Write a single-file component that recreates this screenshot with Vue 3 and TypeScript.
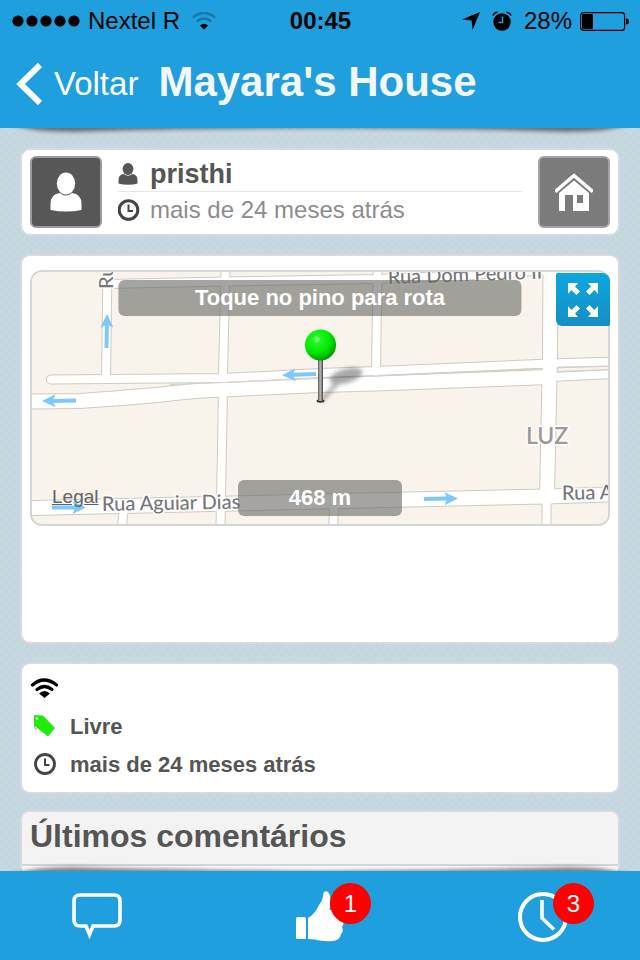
<script setup lang="ts">
import { ref } from 'vue'

interface StreetLabel {
  text: string
  x: number
  y: number
  angle: number
}

const place = ref("Mayara's House")
const user = ref('pristhi')
const lastSeen = ref('mais de 24 meses atrás')
const distance = ref('468 m')
const likes = ref(1)
const checkins = ref(3)

const roads: { d: string; kind: string }[] = [
  { d: 'M107.5 268L106 379', kind: 'narrow' },
  { d: 'M107 284L225 281.5L377 279L470 275L550 270', kind: 'narrow' },
  { d: 'M225.5 268L223 375L222.5 420L220.5 528', kind: 'narrow' },
  { d: 'M377.5 268L376 372', kind: 'narrow' },
  { d: 'M546.5 495V528', kind: 'narrow' },
  { d: 'M123.5 510L122 528', kind: 'narrow' },
  { d: 'M334.5 502L333 528', kind: 'narrow' },
  { d: 'M550.5 268L550 355L549 400L547 498', kind: 'wide' },
  { d: 'M51 379.5L223 378L320 373L376 371L550 363.5L612 361.5', kind: 'narrow' },
  { d: 'M550 377L612 374', kind: 'narrow' },
  { d: 'M28 401.5L80 401Q150 396 170 393.5Q200 390 223 389.5L320 385L376 383.5L550 377', kind: 'wide' },
  { d: 'M28 508L320 501.5L546 496.5L612 494.5', kind: 'wide' },
]

const arrows: string[] = [
  'translate(106.5 348) rotate(-89)',
  'translate(76 400.5) rotate(179)',
  'translate(316 374) rotate(178)',
  'translate(52 507.5)',
  'translate(424 499) rotate(-1)',
]

const labels: StreetLabel[] = [
  { text: 'Rua Dom Pedro II', x: 388, y: 284, angle: -2 },
  { text: 'Rua Aguiar Dias', x: 102, y: 511, angle: -1 },
  { text: 'Rua A', x: 562, y: 500, angle: -1 },
  { text: 'Ru', x: 113, y: 289, angle: -90 },
]
</script>

<template>
  <div class="app">
    <header class="top">
      <div class="status">
        <div class="status-side">
          <svg width="68" height="12" viewBox="0 0 68 12" aria-hidden="true">
            <circle v-for="n in 5" :key="n" :cx="n * 14 - 8" cy="6" r="5.6" />
          </svg>
          <span>Nextel R</span>
          <svg class="status-wifi" width="24" height="18" viewBox="0 0 24 18" fill="none" aria-hidden="true">
            <path d="M1 5.5Q12 -3.5 23 5.5" stroke="#1479a9" stroke-width="2.6" />
            <path d="M4.8 9.6Q12 3.4 19.2 9.6" stroke="#1479a9" stroke-width="2.6" />
            <path d="M8 13.4Q12 10 16 13.4L12 17.8Z" fill="#000" />
          </svg>
        </div>
        <strong class="time">00:45</strong>
        <div class="status-side right">
          <svg class="locate" width="18" height="18" viewBox="0 0 18 18" aria-hidden="true">
            <path d="M18 0L10.5 18L9.6 8.5L0 7.6Z" />
          </svg>
          <svg class="alarm" width="20" height="20" viewBox="0 0 20 20" aria-hidden="true">
            <circle cx="10" cy="11" r="8.7" />
            <path d="M1 4.5Q2 1.5 5.5 1.2M19 4.5Q18 1.5 14.5 1.2" fill="none" stroke="#000" stroke-width="1.5" />
            <path d="M10.5 5.5V11.5H6.5" fill="none" stroke="#1f9fdd" stroke-width="1.6" />
          </svg>
          <span>28%</span>
          <svg width="49" height="19" viewBox="0 0 49 19" aria-hidden="true">
            <rect x=".6" y=".6" width="44" height="17.8" rx="3" fill="none" stroke="#000" stroke-width="1.2" />
            <rect x="2" y="2" width="11" height="15" rx="1" />
            <path d="M46 6.5Q49 6.5 49 9.5T46 12.5Z" />
          </svg>
        </div>
      </div>
      <div class="bar">
        <button class="back" type="button">
          <svg width="26" height="42" viewBox="0 0 26 42" fill="none" aria-hidden="true">
            <path d="M24 2L4.5 21L24 40" stroke="#fff" stroke-width="6" />
          </svg>
          <span>Voltar</span>
        </button>
        <h1>{{ place }}</h1>
      </div>
      <svg class="curl" viewBox="0 0 640 12" preserveAspectRatio="none" aria-hidden="true">
        <path d="M0 -6L30 1Q55 5 100 3Q200 0 320 0Q440 0 540 3Q585 5 610 1L640 -6Z" />
      </svg>
    </header>

    <main class="content">
      <section class="card profile">
        <button class="tile" type="button" aria-label="Perfil">
          <svg width="34" height="42" viewBox="0 0 34 42" fill="#fff" aria-hidden="true">
            <ellipse cx="17" cy="12.5" rx="9.2" ry="11" />
            <path d="M1.500 39V33Q1.500 23 11 22Q17 27 23 22Q32.500 23 32.500 33V39Q25 40.500 17 40.500T1.500 39Z" />
          </svg>
        </button>
        <div class="who">
          <div class="who-row name">
            <svg width="22" height="22" viewBox="0 0 22 22" fill="#555" aria-hidden="true">
              <ellipse cx="10" cy="6" rx="5.4" ry="6" />
              <path d="M.5 20.500V17Q.5 11.500 6 11Q10 14.500 14 11Q19.500 11.500 19.500 17V20.500Q15.500 21.800 10 21.800T.5 20.500Z" />
            </svg>
            <strong>{{ user }}</strong>
          </div>
          <div class="who-row seen">
            <svg width="22" height="22" viewBox="0 0 22 22" fill="none" stroke="#444" aria-hidden="true">
              <circle cx="10.5" cy="11" r="9.3" stroke-width="3" />
              <path d="M10.500 5.500V12H15" stroke-width="2" />
            </svg>
            <span>{{ lastSeen }}</span>
          </div>
        </div>
        <button class="tile home" type="button" aria-label="Casa">
          <svg width="38" height="38" viewBox="0 0 38 38" aria-hidden="true">
            <path d="M1.500 17.500L19 2.500L36.500 17.500" fill="none" stroke="#fff" stroke-width="3.6" stroke-linecap="square" />
            <path d="M4 38V20L19 7.500L34 20V38H18V22H10V38ZM22 22V30H28V22Z" fill="#fff" fill-rule="evenodd" />
          </svg>
        </button>
      </section>

      <section class="card map-card">
        <div class="map">
          <svg class="streets" viewBox="32 272 576 252" preserveAspectRatio="xMidYMid slice" role="img" aria-label="Mapa">
            <defs>
              <radialGradient id="pin-head" cx=".38" cy=".32" r=".7">
                <stop offset="0" stop-color="#b6ffb6" />
                <stop offset=".17" stop-color="#22f722" />
                <stop offset=".6" stop-color="#00ea00" />
                <stop offset="1" stop-color="#009c00" />
              </radialGradient>
              <linearGradient id="pin-stem">
                <stop offset="0" stop-color="#555" />
                <stop offset=".45" stop-color="#bbb" />
                <stop offset="1" stop-color="#444" />
              </linearGradient>
              <filter id="soft" x="-30%" y="-30%" width="160%" height="160%">
                <feGaussianBlur stdDeviation="2" />
              </filter>
            </defs>
            <rect x="-400" y="0" width="1440" height="900" fill="#f8f4ec" />
            <path v-for="(r, i) in roads" :key="'c' + i" :d="r.d" :class="['casing', r.kind]" />
            <path v-for="(r, i) in roads" :key="'f' + i" :d="r.d" :class="['road', r.kind]" />
            <path d="M170 384.500L240 382L376 376L542 368.500M558 367L612 366M558 371.500L612 369.500" class="median" />
            <path
              v-for="a in arrows"
              :key="a"
              :transform="a"
              d="M0 -2H22.500L20.500 -6.500L34 0L20.500 6.500L22.500 2H0Z"
              fill="#7dc8fc"
            />
            <text
              v-for="l in labels"
              :key="l.text"
              class="street"
              :transform="`translate(${l.x} ${l.y}) rotate(${l.angle})`"
            >{{ l.text }}</text>
            <text class="district" x="526" y="444">LUZ</text>
            <g filter="url(#soft)" opacity=".42">
              <path d="M321 401L340 380" stroke="#333" stroke-width="4" />
              <ellipse cx="346" cy="376" rx="17" ry="7" transform="rotate(-16 346 376)" fill="#333" />
            </g>
            <ellipse cx="320.5" cy="401" rx="4" ry="1.7" fill="#333" />
            <rect x="318" y="358" width="5" height="43" fill="url(#pin-stem)" />
            <circle cx="320.5" cy="345" r="15.5" fill="url(#pin-head)" />
          </svg>
          <p class="pill hint">Toque no pino para rota</p>
          <p class="pill distance">{{ distance }}</p>
          <a class="legal" href="#legal">Legal</a>
          <button class="expand" type="button" aria-label="Expandir mapa">
            <svg width="30" height="34" viewBox="0 0 30 34" fill="#fff" aria-hidden="true">
              <path d="M0 0H10L7 3.500L12 8.500L8.500 12L3.500 7L0 11Z" />
              <path d="M30 0H20L23 3.500L18 8.500L21.500 12L26.500 7L30 11Z" />
              <path d="M0 34H10L7 30.500L12 25.500L8.500 22L3.500 27L0 23Z" />
              <path d="M30 34H20L23 30.500L18 25.500L21.500 22L26.500 27L30 23Z" />
            </svg>
          </button>
        </div>
      </section>

      <section class="card">
        <ul class="facts">
          <li>
            <svg width="28" height="22" viewBox="0 0 28 22" fill="none" stroke="#000" stroke-linecap="round" aria-hidden="true">
              <path d="M2.500 8Q14 -2 26.500 8" stroke-width="3.2" />
              <path d="M7 12.500Q14.500 6.500 22 12.500" stroke-width="3.2" />
              <path d="M9 16.500Q14.500 11.500 20 16.500L14.500 21Z" fill="#000" stroke="none" />
            </svg>
          </li>
          <li>
            <svg width="28" height="24" viewBox="0 0 28 24" aria-hidden="true">
              <path d="M5 10Q3 13 7 16" fill="none" stroke="#b9b4c4" stroke-width="1.2" />
              <path d="M4 2Q4 1 5 1L13 1.500L25 14L18 22.500L4 11.500Z" fill="#22ea0b" />
              <circle cx="7" cy="4.5" r="1.3" fill="#d6fbd0" />
            </svg>
            <span>Livre</span>
          </li>
          <li>
            <svg width="28" height="22" viewBox="0 0 28 22" fill="none" stroke="#444" aria-hidden="true">
              <circle cx="15" cy="11" r="9.5" stroke-width="2.8" />
              <path d="M15 5.500V12H19.500" stroke-width="2" />
            </svg>
            <span>{{ lastSeen }}</span>
          </li>
        </ul>
      </section>

      <section class="card comments">
        <h2>Últimos comentários</h2>
        <div class="comment-list"></div>
      </section>
    </main>

    <nav class="tabs">
      <svg class="curl" viewBox="0 0 640 12" preserveAspectRatio="none" aria-hidden="true">
        <path d="M0 18L30 11Q55 7 100 9Q200 11 320 12Q440 11 540 9Q585 7 610 11L640 18Z" />
      </svg>
      <button class="tab" type="button" aria-label="Comentários">
        <svg width="50" height="52" viewBox="0 0 50 52" fill="none" aria-hidden="true">
          <path
            d="M8 5H42Q48 5 48 11V30Q48 36 42 36H21L17.500 44.500L14 36H8Q2 36 2 30V11Q2 5 8 5Z"
            stroke="#fff"
            stroke-width="3.6"
          />
        </svg>
      </button>
      <button class="tab" type="button" aria-label="Curtir">
        <svg width="50" height="52" viewBox="0 0 50 52" fill="#fff" aria-hidden="true">
          <rect x="1" y="27" width="10" height="22" rx="1.5" />
          <path d="M13 28Q20 24 24 15Q28 10 28.500 3Q30 0 33 2Q37 6 34.500 20L45 21Q50 24 47 29Q50 33 47 37Q49 41 46 44Q45 50 38 51Q28 52 20 49.500L13 49Z" />
        </svg>
        <span class="badge">{{ likes }}</span>
      </button>
      <button class="tab" type="button" aria-label="Check-ins">
        <svg width="50" height="52" viewBox="0 0 50 52" fill="none" stroke="#fff" aria-hidden="true">
          <circle cx="25" cy="27" r="23" stroke-width="4" />
          <path d="M24 10V28L36 39.500" stroke-width="3.6" />
        </svg>
        <span class="badge">{{ checkins }}</span>
      </button>
    </nav>
  </div>
</template>

<style>
body {
  margin: 0;
}
</style>

<style scoped>
.app {
  display: flex;
  flex-direction: column;
  height: 100vh;
  overflow: hidden;
  font-family: "Liberation Sans", Arial, sans-serif;
  color: #555;
  background-color: #c8d8e1;
  background-image:
    repeating-linear-gradient(45deg, rgba(160, 195, 215, 0.08) 0 2px, transparent 2px 6px),
    repeating-linear-gradient(-45deg, rgba(160, 195, 215, 0.08) 0 2px, transparent 2px 6px);
}

svg {
  display: block;
  flex: none;
}

h1,
h2,
p,
ul {
  margin: 0;
  padding: 0;
}

button {
  border: 0;
  padding: 0;
  background: none;
  font: inherit;
  color: inherit;
  cursor: pointer;
}

.top,
.tabs {
  position: relative;
  z-index: 1;
  flex: none;
  background: #1f9fdd;
}

.status {
  display: grid;
  grid-template-columns: 1fr auto 1fr;
  align-items: center;
  height: 40px;
  padding: 0 11px 0 12px;
  font-size: 24px;
  line-height: 42px;
  color: #000;
}

.status-side {
  display: flex;
  align-items: center;
  gap: 8px;
}

.status-side.right {
  justify-content: flex-end;
}

.status-wifi {
  margin-left: 4px;
}

.locate,
.alarm {
  margin-right: 4px;
}

.bar {
  display: flex;
  align-items: center;
  gap: 20px;
  height: 88px;
  padding: 0 16px;
  box-sizing: border-box;
}

.back {
  display: flex;
  align-items: center;
  gap: 12px;
  font-size: 33px;
  line-height: 44px;
  color: #fff;
}

h1 {
  padding-bottom: 4px;
  font-size: 42px;
  line-height: 48px;
  color: #f4f6f8;
  white-space: nowrap;
}

.curl {
  position: absolute;
  left: 0;
  width: 100%;
  height: 12px;
  overflow: visible;
  fill: #222;
  opacity: 0.6;
  filter: blur(2px);
  pointer-events: none;
}

.top .curl {
  top: 100%;
  clip-path: inset(0 0 -8px 0);
}

.tabs .curl {
  bottom: 100%;
  clip-path: inset(-8px 0 0 0);
}

.content {
  display: flex;
  flex: 1;
  flex-direction: column;
  gap: 18px;
  min-height: 0;
  padding: 20px 20px 0;
  overflow-y: auto;
  scrollbar-width: none;
}

.card {
  flex: none;
  border: 2px solid #d8dade;
  border-radius: 10px;
  background: #fff;
}

.profile {
  display: flex;
  gap: 16px;
  padding: 6px 8px;
}

.tile {
  display: grid;
  place-items: center;
  width: 72px;
  height: 72px;
  border: 2px solid #9b9b9b;
  border-radius: 6px;
  background: #575757;
}

.tile.home {
  border-color: #a3a3a3;
  background: #7b7b7b;
}

.who {
  flex: 1;
}

.who-row {
  display: flex;
  align-items: center;
  gap: 10px;
  height: 36px;
}

.who-row.name {
  box-sizing: border-box;
  border-bottom: 1px solid #e6e6e6;
  font-size: 27px;
}

.who-row.seen {
  font-size: 24px;
  color: #8c8c8c;
}

.map-card {
  padding: 14px 8px 116px;
}

.map {
  position: relative;
  height: 252px;
  border: 2px solid #d5d5d8;
  border-radius: 12px;
}

.streets {
  width: 100%;
  height: 100%;
  border-radius: 10px;
}

.casing,
.road {
  fill: none;
  stroke-linecap: round;
  stroke-linejoin: round;
}

.casing {
  stroke: #d0cac1;
}

.road {
  stroke: #fff;
}

.casing.narrow {
  stroke-width: 10px;
}

.road.narrow {
  stroke-width: 8px;
}

.casing.wide {
  stroke-width: 16px;
}

.road.wide {
  stroke-width: 14px;
}

.median {
  fill: none;
  stroke: #d6cfc5;
  stroke-width: 1px;
}

.street,
.district {
  font-family: Lato, sans-serif;
  font-size: 20px;
  font-weight: 500;
  fill: #77777a;
  stroke: #fff;
  stroke-width: 3px;
  stroke-linejoin: round;
  paint-order: stroke;
}

.district {
  font-size: 23px;
  font-weight: 600;
  fill: #9d9b99;
}

.pill {
  position: absolute;
  left: 50%;
  transform: translateX(-50%);
  border-radius: 6px;
  background: rgba(105, 103, 101, 0.6);
  color: #fff;
  font-size: 22px;
  font-weight: bold;
  line-height: 36px;
  text-align: center;
}

.hint {
  top: 8px;
  width: 70%;
}

.distance {
  bottom: 8px;
  width: 164px;
}

.legal {
  position: absolute;
  left: 20px;
  bottom: 16px;
  color: #626262;
  font-size: 19px;
  line-height: 22px;
  text-decoration: underline;
}

.expand {
  position: absolute;
  top: 1px;
  right: -2px;
  display: grid;
  place-items: center;
  width: 54px;
  height: 53px;
  border-radius: 2px 8px 2px 6px;
  background: linear-gradient(#0da6e0, #168ec3);
}

.facts {
  padding: 5px 8px 9px;
  list-style: none;
  font-size: 22px;
  font-weight: bold;
}

.facts li {
  display: flex;
  align-items: center;
  gap: 12px;
  height: 38px;
}

.facts span,
.who-row strong {
  padding-top: 2px;
}

.comments {
  margin-top: -2px;
  overflow: hidden;
}

h2 {
  padding: 0 8px 4px;
  border-bottom: 2px solid #d5d5d5;
  background: #f3f3f3;
  font-size: 32px;
  line-height: 48px;
}

.comment-list {
  height: 24px;
}

.tabs {
  display: flex;
  align-items: center;
  justify-content: space-between;
  height: 89px;
  padding: 0 72px;
}

.tab {
  position: relative;
}

.badge {
  position: absolute;
  top: -7px;
  right: -26px;
  width: 41px;
  border-radius: 50%;
  background: #f00;
  color: #fff;
  font-size: 24px;
  line-height: 41px;
  text-align: center;
}
</style>
